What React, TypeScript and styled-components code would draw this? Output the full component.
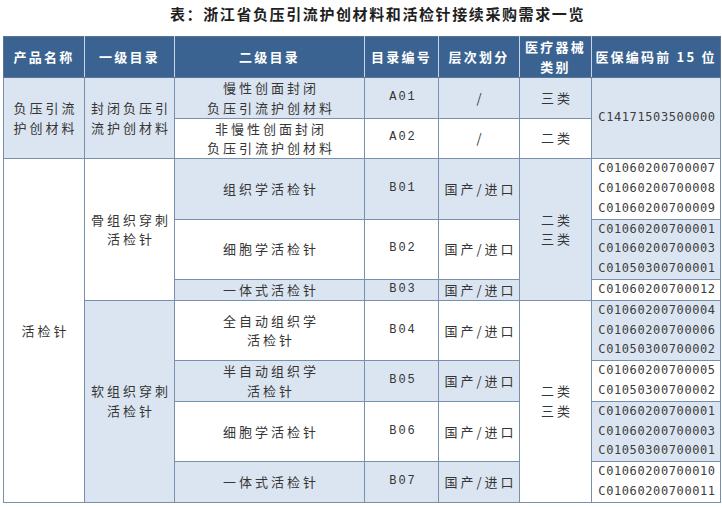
import React from "react";
import styled, { createGlobalStyle } from "styled-components";

const Global = createGlobalStyle`
  html, body { margin: 0; padding: 0; background: #ffffff; }
  body { font-family: "Noto Sans CJK SC", "Noto Sans", sans-serif; }
`;

const Page = styled.div`
  width: 722px;
  height: 507px;
  background: #ffffff;
  padding: 5px 0 0 3px;
  box-sizing: border-box;
  display: flex;
  flex-direction: column;
`;

const Title = styled.div`
  height: 31px;
  display: flex;
  justify-content: center;
  padding-left: 30px;
  font-family: "Noto Sans CJK SC", sans-serif;
  font-weight: 700;
  font-size: 15px;
  letter-spacing: 1.6px;
  line-height: 17px;
  color: #1f1f1f;
`;

const Table = styled.table`
  border-collapse: collapse;
  table-layout: fixed;
  width: 717px;
  border: 1.5px solid #5d7590;
`;

const HeadRow = styled.tr`
  height: 41px;
`;

const HeadCell = styled.th`
  background: #3a6391;
  color: #ffffff;
  font-family: "Noto Sans CJK SC", sans-serif;
  font-weight: 700;
  font-size: 13px;
  letter-spacing: 2.2px;
  line-height: 20px;
  text-align: center;
  vertical-align: middle;
  padding: 0;
  border-left: 1px solid #c9d5e4;
  border-bottom: 1px solid #5d7590;
  &:first-child { border-left: none; }
`;

const Row = styled.tr<{ $h: number }>`
  height: ${(p) => p.$h}px;
`;

const Cell = styled.td<{ $blue?: boolean }>`
  background: ${(p) => (p.$blue ? "#dbe5f1" : "#ffffff")};
  color: #353535;
  font-family: "Noto Sans CJK SC", sans-serif;
  font-weight: 400;
  font-size: 13px;
  letter-spacing: 3px;
  line-height: 19.8px;
  text-align: center;
  vertical-align: middle;
  padding: 0 0 0 3px;
  border: 1px solid #7890ab;
`;

const CodeNo = styled(Cell)`
  font-family: "Liberation Mono", monospace;
  font-size: 12px;
  letter-spacing: 2px;
`;

const CodeCell = styled(Cell)`
  font-family: "DejaVu Sans Mono", "Liberation Mono", monospace;
  font-size: 12px;
  letter-spacing: 0.6px;
  color: #3d3d3d;
  padding: 0 0 0 2px;
`;

const CodeLine = styled.div`
  height: 19.8px;
  line-height: 19.8px;
`;

type Sub = { name: string[]; no: string; codes: string[]; h: number };

const Codes = ({ list }: { list: string[] }) => (
  <>
    {list.map((c, i) => (
      <CodeLine key={i}>{c}</CodeLine>
    ))}
  </>
);

const Lines = ({ list }: { list: string[] }) => (
  <>
    {list.map((t, i) => (
      <div key={i}>{t}</div>
    ))}
  </>
);

const bone: Sub[] = [
  { name: ["组织学活检针"], no: "B01", codes: ["C01060200700007", "C01060200700008", "C01060200700009"], h: 59 },
  { name: ["细胞学活检针"], no: "B02", codes: ["C01060200700001", "C01060200700003", "C01050300700001"], h: 59 },
  { name: ["一体式活检针"], no: "B03", codes: ["C01060200700012"], h: 20 },
];

const soft: Sub[] = [
  { name: ["全自动组织学", "活检针"], no: "B04", codes: ["C01060200700004", "C01060200700006", "C01050300700002"], h: 59 },
  { name: ["半自动组织学", "活检针"], no: "B05", codes: ["C01060200700005", "C01050300700002"], h: 40 },
  { name: ["细胞学活检针"], no: "B06", codes: ["C01060200700001", "C01060200700003", "C01050300700001"], h: 59 },
  { name: ["一体式活检针"], no: "B07", codes: ["C01060200700010", "C01060200700011"], h: 40 },
];

export default function App() {
  let idx = 0;
  const subRow = (s: Sub, lead: React.ReactNode) => {
    const blue = idx % 2 === 0;
    idx += 1;
    return (
      <Row $h={s.h} key={s.no}>
        {lead}
        <Cell $blue={blue}>
          <Lines list={s.name} />
        </Cell>
        <CodeNo $blue={blue}>{s.no}</CodeNo>
        <Cell $blue={blue}>国产/进口</Cell>
        {s.no === "B01" && (
          <Cell $blue rowSpan={3}>
            <Lines list={["二类", "三类"]} />
          </Cell>
        )}
        {s.no === "B04" && (
          <Cell rowSpan={4}>
            <Lines list={["二类", "三类"]} />
          </Cell>
        )}
        <CodeCell $blue={!blue}>
          <Codes list={s.codes} />
        </CodeCell>
      </Row>
    );
  };

  return (
    <Page>
      <Global />
      <Title>表：浙江省负压引流护创材料和活检针接续采购需求一览</Title>
      <Table>
        <colgroup>
          <col style={{ width: 81 }} />
          <col style={{ width: 90 }} />
          <col style={{ width: 190 }} />
          <col style={{ width: 74 }} />
          <col style={{ width: 81 }} />
          <col style={{ width: 72 }} />
          <col style={{ width: 129 }} />
        </colgroup>
        <thead>
          <HeadRow>
            <HeadCell>产品名称</HeadCell>
            <HeadCell>一级目录</HeadCell>
            <HeadCell>二级目录</HeadCell>
            <HeadCell>目录编号</HeadCell>
            <HeadCell>层次划分</HeadCell>
            <HeadCell>
              <Lines list={["医疗器械", "类别"]} />
            </HeadCell>
            <HeadCell>医保编码前 15 位</HeadCell>
          </HeadRow>
        </thead>
        <tbody>
          <Row $h={40}>
            <Cell $blue rowSpan={2}>
              <Lines list={["负压引流", "护创材料"]} />
            </Cell>
            <Cell $blue rowSpan={2}>
              <Lines list={["封闭负压引", "流护创材料"]} />
            </Cell>
            <Cell $blue>
              <Lines list={["慢性创面封闭", "负压引流护创材料"]} />
            </Cell>
            <CodeNo $blue>A01</CodeNo>
            <Cell $blue>/</Cell>
            <Cell $blue>三类</Cell>
            <CodeCell $blue rowSpan={2}>C14171503500000</CodeCell>
          </Row>
          <Row $h={40}>
            <Cell>
              <Lines list={["非慢性创面封闭", "负压引流护创材料"]} />
            </Cell>
            <CodeNo>A02</CodeNo>
            <Cell>/</Cell>
            <Cell>二类</Cell>
          </Row>
          {bone.map((s, i) =>
            subRow(
              s,
              i === 0 ? (
                <>
                  <Cell rowSpan={7}>活检针</Cell>
                  <Cell rowSpan={3}>
                    <Lines list={["骨组织穿刺", "活检针"]} />
                  </Cell>
                </>
              ) : null
            )
          )}
          {soft.map((s, i) =>
            subRow(
              s,
              i === 0 ? (
                <Cell $blue rowSpan={4}>
                  <Lines list={["软组织穿刺", "活检针"]} />
                </Cell>
              ) : null
            )
          )}
        </tbody>
      </Table>
    </Page>
  );
}
